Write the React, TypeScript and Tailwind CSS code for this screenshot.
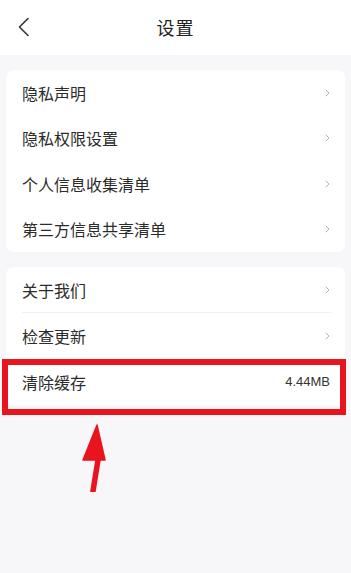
import { ReactNode } from 'react';

const font = { fontFamily: '"Noto Sans CJK SC", "Noto Sans", sans-serif' };

const Chevron = () => (
  <svg width="5" height="8" viewBox="0 0 5 8" fill="none" className="shrink-0">
    <path d="M1 1l3 3-3 3" stroke="#b3b3b3" strokeWidth="1" strokeLinecap="round" strokeLinejoin="round" />
  </svg>
);

const Row = ({ label, right, divider, h = 'h-[45.5px]' }: { label: string; right?: ReactNode; divider?: boolean; h?: string }) => (
  <div className={`${h} flex items-center justify-between pl-4 pr-[15px] relative`}>
    <span className="text-[16px] text-[#2b2b2b]">{label}</span>
    {right ?? <Chevron />}
    {divider && <div className="absolute left-4 right-3.5 bottom-0 h-px bg-[#f0f0f2]" />}
  </div>
);

export default function App() {
  return (
    <div className="w-[351px] h-[573px] bg-[#f7f7f9] flex flex-col relative overflow-hidden" style={font}>
      <div className="h-[55px] bg-white flex items-center justify-center relative shrink-0">
        <svg className="absolute left-[17px] top-[17px]" width="14" height="20" viewBox="0 0 14 20" fill="none">
          <path d="M11 1.5L2.5 10l8.5 8.5" stroke="#333" strokeWidth="1.6" strokeLinecap="round" strokeLinejoin="round" />
        </svg>
        <span className="text-[18px] text-[#222] tracking-[1px]">设置</span>
      </div>

      <div className="mx-1.5 mt-[15px] bg-white rounded-[8px]">
        <Row label="隐私声明" />
        <Row label="隐私权限设置" />
        <Row label="个人信息收集清单" />
        <Row label="第三方信息共享清单" />
      </div>

      <div className="mx-1.5 mt-[15px] bg-white rounded-[8px]">
        <Row label="关于我们" divider h="h-[46px]" />
        <Row label="检查更新" h="h-[46px]" />
        <Row
          label="清除缓存"
          h="h-[46px]"
          right={<span className="text-[13px] text-[#333]" style={{ fontFamily: '"Liberation Sans", Arial, sans-serif' }}>4.44MB</span>}
        />
      </div>

      {/* red highlight */}
      <div className="absolute left-[2px] top-[359px] w-[344px] h-[56px] border-[6px] border-[#e8141e]" />

      {/* arrow */}
      <svg className="absolute left-[78px] top-[420px]" width="32" height="72" viewBox="0 0 32 72" fill="none">
        <path d="M15 71 L 20 40" stroke="#e8141e" strokeWidth="5.5" strokeLinecap="round" />
        <path d="M19 5 L 27 40 L 5 40 Z" fill="#e8141e" stroke="#e8141e" strokeWidth="1.5" strokeLinejoin="round" />
      </svg>
    </div>
  );
}
